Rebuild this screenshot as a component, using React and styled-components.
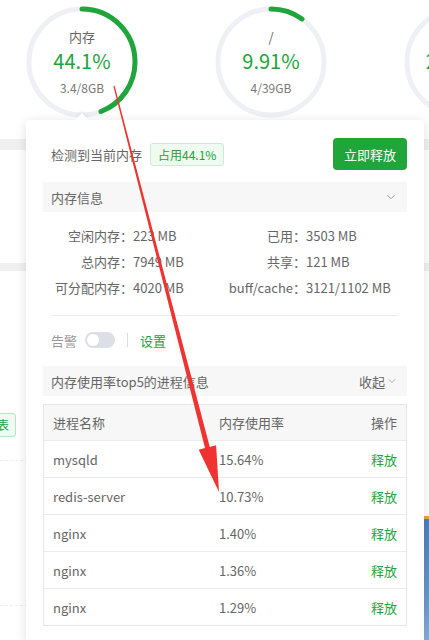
import styled, { createGlobalStyle } from "styled-components";
import { ChevronDown } from "lucide-react";

const GREEN = "#20a53a";

const GlobalStyle = createGlobalStyle`
  html, body {
    margin: 0;
    padding: 0;
    background: #fff;
    overflow: hidden;
  }
  body {
    font-family: "Noto Sans CJK SC", "Noto Sans", sans-serif;
    color: #666;
  }
`;

const Page = styled.div`
  position: relative;
  width: 429px;
  height: 640px;
  overflow: hidden;
  background: #fff;
`;

const GaugeRow = styled.div`
  display: flex;
  gap: 77px;
  padding: 6px 0 0 26px;
  width: max-content;
`;

const Gauge = styled.div`
  display: grid;
  width: 112px;
  height: 112px;
  & > * {
    grid-area: 1 / 1;
  }
`;

const GaugeText = styled.div`
  display: flex;
  flex-direction: column;
  align-items: center;
  justify-content: center;
  text-align: center;
`;

const GaugeLabel = styled.div`
  font-size: 13px;
  line-height: 18px;
  color: #666;
`;

const GaugeValue = styled.div`
  font-size: 20px;
  line-height: 26px;
  margin-top: 2px;
  color: ${GREEN};
`;

const GaugeSub = styled.div`
  font-size: 12px;
  line-height: 17px;
  margin-top: 5px;
  color: #777;
`;

const Body = styled.div`
  display: flex;
  flex-direction: column;
`;

const Band = styled.div`
  height: ${(p) => p.$h}px;
  margin-top: ${(p) => p.$top}px;
  background: #f0f0f0;
`;

const Lower = styled.div`
  display: grid;
  grid-template-columns: 1fr 1fr;
`;

const LeftCol = styled.div`
  display: flex;
  flex-direction: column;
  align-items: flex-start;
`;

const SideTag = styled.div`
  margin: 142px 0 0 -22px;
  height: 22px;
  padding: 0 6px;
  border: 1px solid #b9e4c3;
  border-radius: 3px;
  background: #f0faf2;
  color: ${GREEN};
  font-size: 12px;
  line-height: 22px;
`;

const DashLine = styled.div`
  width: 100%;
  margin-top: ${(p) => p.$top}px;
  border-top: 1px dashed #eee;
`;

const RightCol = styled.div`
  display: flex;
  flex-direction: column;
  align-items: flex-end;
`;

const Banner = styled.div`
  margin-top: 245px;
  width: 60px;
  height: 130px;
  border-top: 3px solid #e9a346;
  background: linear-gradient(180deg, #4f7fb8 0%, #6b98c9 60%, #8fb2d8 100%);
`;

const Popover = styled.div`
  position: absolute;
  left: 26px;
  top: 120px;
  width: 398px;
  box-sizing: border-box;
  padding: 18px 17px 17px;
  background: #fff;
  border-radius: 4px;
  box-shadow: 0 2px 12px rgba(0, 0, 0, 0.12);

  &::before {
    content: "";
    position: absolute;
    top: -5px;
    left: 51px;
    width: 10px;
    height: 10px;
    background: #fff;
    transform: rotate(45deg);
    box-shadow: -2px -2px 3px rgba(0, 0, 0, 0.04);
  }
`;

const HeaderRow = styled.div`
  display: flex;
  align-items: center;
  height: 32px;
  padding-left: 8px;
  font-size: 13px;
`;

const UsageTag = styled.span`
  margin-left: 8px;
  height: 21px;
  padding: 0 7px;
  border: 1px solid #cdebd3;
  border-radius: 3px;
  background: #effaf1;
  color: ${GREEN};
  font-size: 12px;
  line-height: 21px;
`;

const ReleaseButton = styled.button`
  margin-left: auto;
  width: 74px;
  height: 32px;
  border: none;
  border-radius: 4px;
  background: ${GREEN};
  color: #fff;
  font-family: inherit;
  font-size: 13px;
  cursor: pointer;
`;

const SectionBar = styled.div`
  display: flex;
  align-items: center;
  justify-content: space-between;
  height: 30px;
  margin-top: ${(p) => p.$top}px;
  padding: 0 9px 0 8px;
  background: #f7f7f7;
  font-size: 13px;
  color: #666;
`;

const Fold = styled.span`
  display: flex;
  align-items: center;
  gap: 1px;
  color: #666;
`;

const InfoGrid = styled.div`
  display: grid;
  grid-template-columns: 90px 94px 79px 1fr;
  grid-auto-rows: 26px;
  align-items: center;
  margin-top: 10px;
  font-size: 13px;
  color: #666;
  white-space: nowrap;
`;

const InfoLabel = styled.span`
  text-align: right;
`;

const InfoValue = styled.span``;

const Divider = styled.div`
  height: 1px;
  margin: 15px 9px 0 8px;
  background: #ececec;
`;

const AlarmRow = styled.div`
  display: flex;
  align-items: center;
  height: 20px;
  margin-top: 14px;
  padding-left: 8px;
  font-size: 13px;
  color: #999;
`;

const Switch = styled.span`
  position: relative;
  margin-left: 8px;
  width: 30px;
  height: 16px;
  border-radius: 8px;
  background: #dcdfe6;

  &::after {
    content: "";
    position: absolute;
    top: 2px;
    left: 2px;
    width: 12px;
    height: 12px;
    border-radius: 50%;
    background: #fff;
  }
`;

const Sep = styled.span`
  margin-left: 12px;
  width: 1px;
  height: 14px;
  background: #ddd;
`;

const SetLink = styled.a`
  margin-left: 12px;
  color: ${GREEN};
  text-decoration: none;
`;

const Table = styled.div`
  margin-top: 8px;
  border: 1px solid #e6e6e6;
  font-size: 13px;
  color: #666;
`;

const TRow = styled.div`
  display: grid;
  grid-template-columns: 166px 1fr auto;
  align-items: center;
  height: ${(p) => (p.$head ? 35 : 36)}px;
  padding: 0 9px;
  background: ${(p) => (p.$head ? "#f7f7f7" : "#fff")};
  border-top: ${(p) => (p.$head ? "none" : "1px solid #ebebeb")};
`;

const ActionLink = styled.a`
  color: ${GREEN};
  text-decoration: none;
`;

const ArrowLayer = styled.svg`
  position: absolute;
  left: 0;
  top: 0;
  width: 429px;
  height: 640px;
  pointer-events: none;
`;

const gauges = [
  { label: "内存", value: "44.1%", sub: "3.4/8GB", pct: 44.1 },
  { label: "/", value: "9.91%", sub: "4/39GB", pct: 9.91 },
  { label: "CPU", value: "25.31%", sub: "3.1/12GB", pct: 25.31 },
];

const info = [
  ["空闲内存：", "223 MB", "已用：", "3503 MB"],
  ["总内存：", "7949 MB", "共享：", "121 MB"],
  ["可分配内存：", "4020 MB", "buff/cache：", "3121/1102 MB"],
];

const procs = [
  ["mysqld", "15.64%"],
  ["redis-server", "10.73%"],
  ["nginx", "1.40%"],
  ["nginx", "1.36%"],
  ["nginx", "1.29%"],
];

const R = 53;
const C = 2 * Math.PI * R;

const Ring = ({ pct }) => (
  <svg width="112" height="112" viewBox="0 0 112 112">
    <circle cx="56" cy="56" r={R} fill="none" stroke="#eef0f5" strokeWidth="5" />
    <circle
      cx="56"
      cy="56"
      r={R}
      fill="none"
      stroke={GREEN}
      strokeWidth="5"
      strokeLinecap="round"
      strokeDasharray={`${(C * pct) / 100} ${C}`}
      transform="rotate(-90 56 56)"
    />
  </svg>
);

const App = () => {
  return (
    <Page>
      <GlobalStyle />
      <GaugeRow>
        {gauges.map((g) => (
          <Gauge key={g.value}>
            <Ring pct={g.pct} />
            <GaugeText>
              <GaugeLabel>{g.label}</GaugeLabel>
              <GaugeValue>{g.value}</GaugeValue>
              <GaugeSub>{g.sub}</GaugeSub>
            </GaugeText>
          </Gauge>
        ))}
      </GaugeRow>

      <Body>
        <Band $h={11} $top={21} />
        <Band $h={8} $top={113} />
        <Lower>
          <LeftCol>
            <SideTag>列表</SideTag>
            <DashLine $top={23} />
            <DashLine $top={144} />
          </LeftCol>
          <RightCol>
            <Banner />
          </RightCol>
        </Lower>
      </Body>

      <Popover>
        <HeaderRow>
          检测到当前内存
          <UsageTag>占用44.1%</UsageTag>
          <ReleaseButton>立即释放</ReleaseButton>
        </HeaderRow>

        <SectionBar $top={12}>
          内存信息
          <ChevronDown size={14} strokeWidth={1.3} color="#888" />
        </SectionBar>

        <InfoGrid>
          {info.map((r) => (
            <>
              <InfoLabel key={r[0]}>{r[0]}</InfoLabel>
              <InfoValue>{r[1]}</InfoValue>
              <InfoLabel>{r[2]}</InfoLabel>
              <InfoValue>{r[3]}</InfoValue>
            </>
          ))}
        </InfoGrid>

        <Divider />

        <AlarmRow>
          告警
          <Switch />
          <Sep />
          <SetLink href="#">设置</SetLink>
        </AlarmRow>

        <SectionBar $top={16}>
          内存使用率top5的进程信息
          <Fold>
            收起
            <ChevronDown size={12} strokeWidth={1.3} color="#888" />
          </Fold>
        </SectionBar>

        <Table>
          <TRow $head>
            <span>进程名称</span>
            <span>内存使用率</span>
            <span>操作</span>
          </TRow>
          {procs.map((p, i) => (
            <TRow key={i}>
              <span>{p[0]}</span>
              <span>{p[1]}</span>
              <ActionLink href="#">释放</ActionLink>
            </TRow>
          ))}
        </Table>
      </Popover>

      <ArrowLayer viewBox="0 0 429 640">
        <polygon
          fill="#ee3330"
          points="114.6,85.8 209.8,446.9 216.1,445.2 219,492 198.7,449.8 205,448.1 113.4,86.2"
        />
      </ArrowLayer>
    </Page>
  );
};

export default App;
